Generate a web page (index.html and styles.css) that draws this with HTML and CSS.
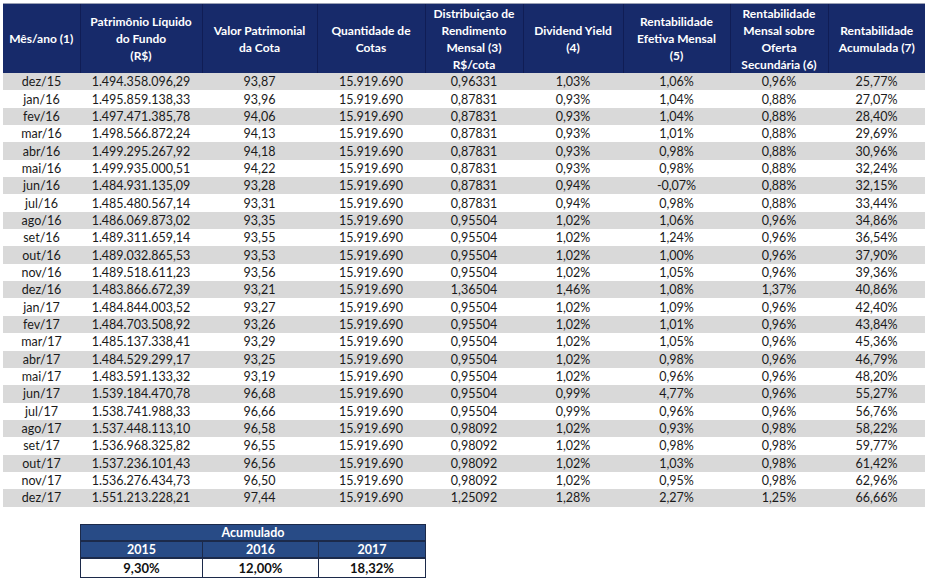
FILE: index.html
```html
<!DOCTYPE html>
<html lang="pt-BR">
<head>
<meta charset="utf-8">
<title>Rentabilidade</title>
<link rel="stylesheet" href="styles.css">
</head>
<body>
<div class="page">
<table class="main">
<colgroup>
<col class="c1"><col class="c2"><col class="c3"><col class="c4"><col class="c5"><col class="c6"><col class="c7"><col class="c8"><col class="c9">
</colgroup>
<thead>
<tr>
<th>Mês/ano (1)</th>
<th>Patrimônio Líquido<br>do Fundo<br>(R$)</th>
<th>Valor Patrimonial<br>da Cota</th>
<th>Quantidade de<br>Cotas</th>
<th>Distribuição de<br>Rendimento<br>Mensal (3)<br>R$/cota</th>
<th>Dividend Yield<br>(4)</th>
<th>Rentabilidade<br>Efetiva Mensal<br>(5)</th>
<th>Rentabilidade<br>Mensal sobre<br>Oferta<br>Secundária (6)</th>
<th>Rentabilidade<br>Acumulada (7)</th>
</tr>
</thead>
<tbody>
<tr><td>dez/15</td><td>1.494.358.096,29</td><td>93,87</td><td>15.919.690</td><td>0,96331</td><td>1,03%</td><td>1,06%</td><td>0,96%</td><td>25,77%</td></tr>
<tr><td>jan/16</td><td>1.495.859.138,33</td><td>93,96</td><td>15.919.690</td><td>0,87831</td><td>0,93%</td><td>1,04%</td><td>0,88%</td><td>27,07%</td></tr>
<tr><td>fev/16</td><td>1.497.471.385,78</td><td>94,06</td><td>15.919.690</td><td>0,87831</td><td>0,93%</td><td>1,04%</td><td>0,88%</td><td>28,40%</td></tr>
<tr><td>mar/16</td><td>1.498.566.872,24</td><td>94,13</td><td>15.919.690</td><td>0,87831</td><td>0,93%</td><td>1,01%</td><td>0,88%</td><td>29,69%</td></tr>
<tr><td>abr/16</td><td>1.499.295.267,92</td><td>94,18</td><td>15.919.690</td><td>0,87831</td><td>0,93%</td><td>0,98%</td><td>0,88%</td><td>30,96%</td></tr>
<tr><td>mai/16</td><td>1.499.935.000,51</td><td>94,22</td><td>15.919.690</td><td>0,87831</td><td>0,93%</td><td>0,98%</td><td>0,88%</td><td>32,24%</td></tr>
<tr><td>jun/16</td><td>1.484.931.135,09</td><td>93,28</td><td>15.919.690</td><td>0,87831</td><td>0,94%</td><td>-0,07%</td><td>0,88%</td><td>32,15%</td></tr>
<tr><td>jul/16</td><td>1.485.480.567,14</td><td>93,31</td><td>15.919.690</td><td>0,87831</td><td>0,94%</td><td>0,98%</td><td>0,88%</td><td>33,44%</td></tr>
<tr><td>ago/16</td><td>1.486.069.873,02</td><td>93,35</td><td>15.919.690</td><td>0,95504</td><td>1,02%</td><td>1,06%</td><td>0,96%</td><td>34,86%</td></tr>
<tr><td>set/16</td><td>1.489.311.659,14</td><td>93,55</td><td>15.919.690</td><td>0,95504</td><td>1,02%</td><td>1,24%</td><td>0,96%</td><td>36,54%</td></tr>
<tr><td>out/16</td><td>1.489.032.865,53</td><td>93,53</td><td>15.919.690</td><td>0,95504</td><td>1,02%</td><td>1,00%</td><td>0,96%</td><td>37,90%</td></tr>
<tr><td>nov/16</td><td>1.489.518.611,23</td><td>93,56</td><td>15.919.690</td><td>0,95504</td><td>1,02%</td><td>1,05%</td><td>0,96%</td><td>39,36%</td></tr>
<tr><td>dez/16</td><td>1.483.866.672,39</td><td>93,21</td><td>15.919.690</td><td>1,36504</td><td>1,46%</td><td>1,08%</td><td>1,37%</td><td>40,86%</td></tr>
<tr><td>jan/17</td><td>1.484.844.003,52</td><td>93,27</td><td>15.919.690</td><td>0,95504</td><td>1,02%</td><td>1,09%</td><td>0,96%</td><td>42,40%</td></tr>
<tr><td>fev/17</td><td>1.484.703.508,92</td><td>93,26</td><td>15.919.690</td><td>0,95504</td><td>1,02%</td><td>1,01%</td><td>0,96%</td><td>43,84%</td></tr>
<tr><td>mar/17</td><td>1.485.137.338,41</td><td>93,29</td><td>15.919.690</td><td>0,95504</td><td>1,02%</td><td>1,05%</td><td>0,96%</td><td>45,36%</td></tr>
<tr><td>abr/17</td><td>1.484.529.299,17</td><td>93,25</td><td>15.919.690</td><td>0,95504</td><td>1,02%</td><td>0,98%</td><td>0,96%</td><td>46,79%</td></tr>
<tr><td>mai/17</td><td>1.483.591.133,32</td><td>93,19</td><td>15.919.690</td><td>0,95504</td><td>1,02%</td><td>0,96%</td><td>0,96%</td><td>48,20%</td></tr>
<tr><td>jun/17</td><td>1.539.184.470,78</td><td>96,68</td><td>15.919.690</td><td>0,95504</td><td>0,99%</td><td>4,77%</td><td>0,96%</td><td>55,27%</td></tr>
<tr><td>jul/17</td><td>1.538.741.988,33</td><td>96,66</td><td>15.919.690</td><td>0,95504</td><td>0,99%</td><td>0,96%</td><td>0,96%</td><td>56,76%</td></tr>
<tr><td>ago/17</td><td>1.537.448.113,10</td><td>96,58</td><td>15.919.690</td><td>0,98092</td><td>1,02%</td><td>0,93%</td><td>0,98%</td><td>58,22%</td></tr>
<tr><td>set/17</td><td>1.536.968.325,82</td><td>96,55</td><td>15.919.690</td><td>0,98092</td><td>1,02%</td><td>0,98%</td><td>0,98%</td><td>59,77%</td></tr>
<tr><td>out/17</td><td>1.537.236.101,43</td><td>96,56</td><td>15.919.690</td><td>0,98092</td><td>1,02%</td><td>1,03%</td><td>0,98%</td><td>61,42%</td></tr>
<tr><td>nov/17</td><td>1.536.276.434,73</td><td>96,50</td><td>15.919.690</td><td>0,98092</td><td>1,02%</td><td>0,95%</td><td>0,98%</td><td>62,96%</td></tr>
<tr><td>dez/17</td><td>1.551.213.228,21</td><td>97,44</td><td>15.919.690</td><td>1,25092</td><td>1,28%</td><td>2,27%</td><td>1,25%</td><td>66,66%</td></tr>
</tbody>
</table>

<table class="acc">
<colgroup><col class="a1"><col class="a2"><col class="a3"></colgroup>
<tr class="title"><th colspan="3">Acumulado</th></tr>
<tr class="years"><th>2015</th><th>2016</th><th>2017</th></tr>
<tr class="vals"><td>9,30%</td><td>12,00%</td><td>18,32%</td></tr>
</table>
</div>
</body>
</html>
```

FILE: styles.css
```css
html, body {
  margin: 0;
  padding: 0;
  background: #ffffff;
}

.page {
  padding: 3px 4px 0 3px;
  font-family: Lato, "Liberation Sans", sans-serif;
  color: #1a1a1a;
}

.main {
  border-collapse: collapse;
  table-layout: fixed;
  width: 922px;
}

.c1 { width: 77px; }
.c2 { width: 122px; }
.c3 { width: 115px; }
.c4 { width: 108px; }
.c5 { width: 98px; }
.c6 { width: 100px; }
.c7 { width: 107px; }
.c8 { width: 98px; }
.c9 { width: 97px; }

.main thead th {
  background: #172a6a;
  color: #ffffff;
  font-weight: 700;
  font-size: 12px;
  line-height: 17px;
  height: 69px;
  padding: 0 2px;
  text-align: center;
  vertical-align: middle;
  border-left: 1px solid #101d55;
  border-top: 1px solid #9aa0b4;
}

.main thead th:first-child {
  border-left: none;
}

.main tbody td {
  font-size: 12.5px;
  height: 17.35px;
  line-height: 17px;
  padding: 0;
  text-align: center;
  white-space: nowrap;
}

.main tbody tr:nth-child(odd) td {
  background: #d9d9d9;
}

.acc {
  margin: 17px 0 0 77px;
  border-collapse: collapse;
  table-layout: fixed;
  width: 345px;
  font-size: 12.5px;
}

.a1 { width: 122px; }
.a2 { width: 116px; }
.a3 { width: 107px; }

.acc th, .acc td {
  text-align: center;
  padding: 0;
  border: 1px solid #1c2a4a;
  font-weight: 700;
}

.acc .title th {
  background: #284b86;
  color: #ffffff;
  height: 15px;
  line-height: 15px;
  border-bottom: 2px solid #1c2a4a;
}

.acc .years th {
  background: #284b86;
  color: #ffffff;
  height: 15px;
  line-height: 15px;
  border-bottom: 2px solid #1c2a4a;
}

.acc .vals td {
  background: #ffffff;
  color: #111111;
  height: 18px;
  line-height: 18px;
  font-size: 13px;
}
```
